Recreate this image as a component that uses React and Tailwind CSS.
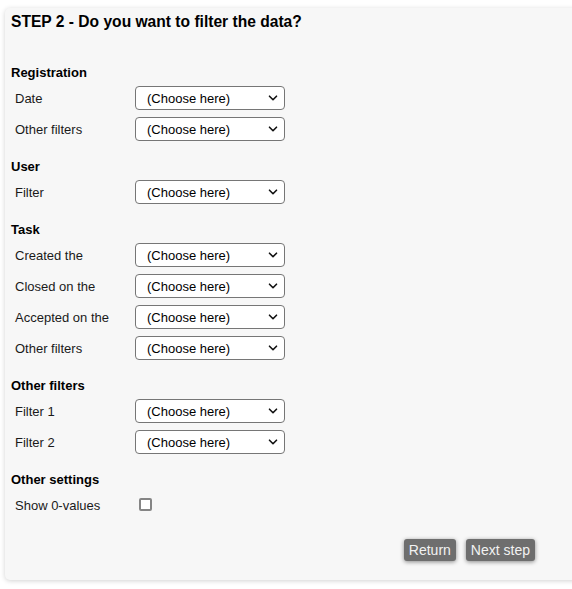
const sections = [
  { title: 'Registration', rows: ['Date', 'Other filters'] },
  { title: 'User', rows: ['Filter'] },
  { title: 'Task', rows: ['Created the', 'Closed on the', 'Accepted on the', 'Other filters'] },
  { title: 'Other filters', rows: ['Filter 1', 'Filter 2'] },
];

const ChooseBox = () => (
  <div className="flex h-[24px] w-[150px] items-center justify-between rounded-[4px] border border-[#767676] bg-white pl-[11px] pr-[6px] pt-[2px] text-[13px] text-black">
    <span>(Choose here)</span>
    <svg width="10" height="10" viewBox="0 0 10 10" fill="none" className="-mt-[2px]">
      <path d="M1.5 3.2 L5 6.7 L8.5 3.2" stroke="#111" strokeWidth="1.6" strokeLinecap="round" strokeLinejoin="round" />
    </svg>
  </div>
);

const Row = ({ label, children }) => (
  <div className="flex h-[24px] items-center pl-[4px]">
    <div className="w-[120px] pt-[2px] text-[13px] text-[#1a1a1a]">{label}</div>
    {children}
  </div>
);

const SectionTitle = ({ children }) => (
  <div className="mb-[6px] h-[15px] text-[13px] font-bold leading-[15px] text-black">{children}</div>
);

export default function App() {
  return (
    <div
      className="min-h-[589px] overflow-hidden bg-white pl-[5px] pt-[8px] pb-[9px]"
      style={{ fontFamily: '"Liberation Sans", Arial, sans-serif' }}
    >
      <div className="w-[600px] rounded-[5px] bg-[#f7f7f7] px-[6px] pt-[5px] pb-[19px] shadow-[0_1px_5px_rgba(0,0,0,0.18)]">
        <h1 className="h-[18px] text-[15.6px] font-bold leading-[18px] text-black">
          STEP 2 - Do you want to filter the data?
        </h1>

        <div className="mt-[34px] flex flex-col gap-[18px]">
          {sections.map((s) => (
            <div key={s.title}>
              <SectionTitle>{s.title}</SectionTitle>
              <div className="flex flex-col gap-[7px]">
                {s.rows.map((r) => (
                  <Row key={r} label={r}>
                    <ChooseBox />
                  </Row>
                ))}
              </div>
            </div>
          ))}

          <div>
            <SectionTitle>Other settings</SectionTitle>
            <Row label="Show 0-values">
              <div className="-mt-[2px] ml-[4px] h-[13px] w-[13px] rounded-[2px] border-2 border-[#858585] bg-white" />
            </Row>
          </div>
        </div>

        <div className="mt-[22px] flex w-[524px] justify-end gap-[10px]">
          <button className="h-[22px] rounded-[3px] bg-[#6e6e6e] px-[5px] text-[14px] leading-[22px] text-[#f2f2f2] shadow-[0_1px_4px_rgba(0,0,0,0.45)]">
            Return
          </button>
          <button className="h-[22px] rounded-[3px] bg-[#6e6e6e] px-[5px] text-[14px] leading-[22px] text-[#f2f2f2] shadow-[0_1px_4px_rgba(0,0,0,0.45)]">
            Next step
          </button>
        </div>
      </div>
    </div>
  );
}
